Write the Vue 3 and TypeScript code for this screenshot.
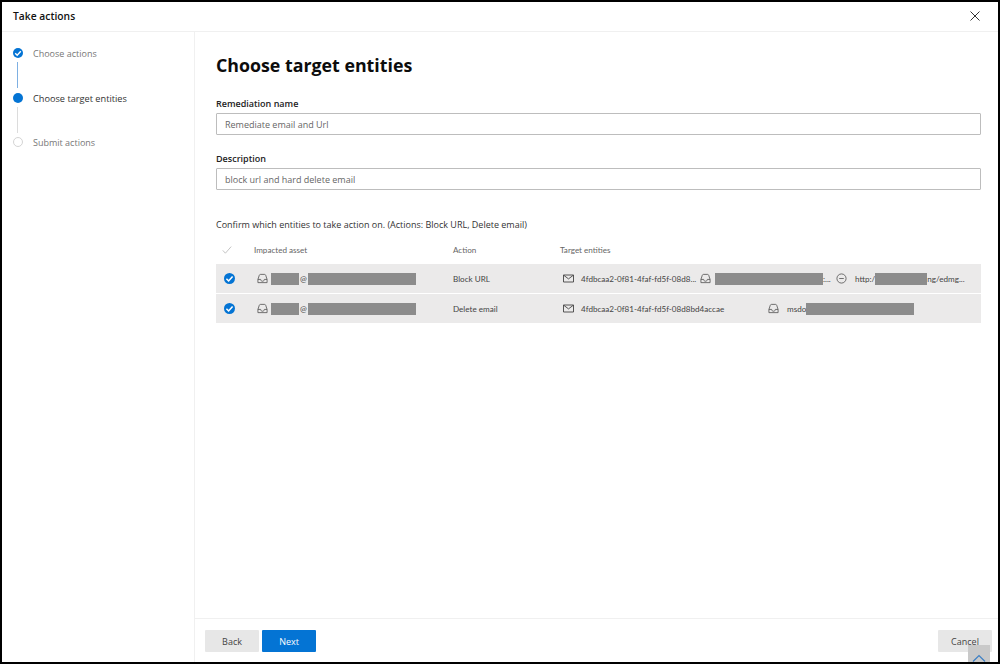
<script setup lang="ts">
type Entity = {
  icon: "mail" | "inbox" | "url";
  before?: string;
  redact?: number;
  after?: string;
  width?: number;
  gap: number;
};
interface Row {
  action: string;
  entities: Entity[];
}

const steps = [
  { label: "Choose actions", state: "done" },
  { label: "Choose target entities", state: "current" },
  { label: "Submit actions", state: "todo" },
];

const rows: Row[] = [
  {
    action: "Block URL",
    entities: [
      { icon: "mail", before: "4fdbcaa2-0f81-4faf-fd5f-08d8...", width: 137, gap: 7 },
      { icon: "inbox", redact: 108, after: ":...", width: 136, gap: 4 },
      { icon: "url", before: "http:/", redact: 52, after: "ng/edmg...", gap: 8 },
    ],
  },
  {
    action: "Delete email",
    entities: [
      { icon: "mail", before: "4fdbcaa2-0f81-4faf-fd5f-08d8bd4accae", width: 205, gap: 7 },
      { icon: "inbox", before: "msdo", redact: 108, gap: 8 },
    ],
  },
];
</script>

<template>
  <div class="frame">
    <header class="top">
      <span class="title">Take actions</span>
      <svg class="close" width="10" height="10" viewBox="0 0 10 10" aria-label="Close">
        <path d="M.5.5l9 9M9.5.5l-9 9" stroke="#333" stroke-width="1" fill="none" />
      </svg>
    </header>

    <div class="body">
      <nav class="steps">
        <div v-for="(step, i) in steps" :key="step.label" class="step" :class="step.state">
          <div class="marker">
            <span class="dot">
              <svg v-if="step.state === 'done'" width="10" height="10" viewBox="0 0 10 10">
                <path d="M2.2 5.2l2 2 3.6-4" stroke="#fff" stroke-width="1.4" fill="none" />
              </svg>
            </span>
            <span v-if="i < steps.length - 1" class="line" />
          </div>
          <span class="step-label">{{ step.label }}</span>
        </div>
      </nav>

      <main class="main">
        <div class="content">
          <h1>Choose target entities</h1>

          <label class="field-label" for="rem-name">Remediation name</label>
          <input id="rem-name" class="field" type="text" value="Remediate email and Url" readonly />

          <label class="field-label second" for="rem-desc">Description</label>
          <input id="rem-desc" class="field" type="text" value="block url and hard delete email" readonly />

          <p class="confirm">Confirm which entities to take action on. (Actions: Block URL, Delete email)</p>

          <div class="grid">
            <div class="row head">
              <span class="c-check">
                <svg width="10" height="10" viewBox="0 0 10 10">
                  <path d="M.8 5.4l2.6 2.8L9.2 1.6" stroke="#b5b5b5" stroke-width=".8" fill="none" />
                </svg>
              </span>
              <span class="c-asset">Impacted asset</span>
              <span class="c-action">Action</span>
              <span class="c-target">Target entities</span>
            </div>

            <div v-for="row in rows" :key="row.action" class="row item">
              <span class="c-check">
                <span class="tick">
                  <svg width="11" height="11" viewBox="0 0 10 10">
                    <path d="M2.2 5.2l2 2 3.6-4" stroke="#fff" stroke-width="1.4" fill="none" />
                  </svg>
                </span>
              </span>
              <span class="c-asset">
                <svg class="ico" width="11" height="11" viewBox="0 0 12 12">
                  <path d="M1 7v3.5h10V7M1 7l1.5-4.5c.2-.6.7-1 1.3-1h4.4c.6 0 1.1.4 1.3 1L11 7M1 7h3c0 1.200.9 2 2 2s2-.8 2-2h3" stroke="#555" stroke-width=".9" fill="none" />
                </svg>
                <i class="redact" style="width: 28px" /><span class="at">@</span><i class="redact" style="width: 108px" />
              </span>
              <span class="c-action">{{ row.action }}</span>
              <span class="c-target">
                <span
                  v-for="(entity, n) in row.entities"
                  :key="n"
                  class="entity"
                  :style="{ width: entity.width ? entity.width + 'px' : undefined }"
                >
                  <svg v-if="entity.icon === 'mail'" class="ico" :style="{ marginRight: entity.gap + 'px' }" width="11" height="9" viewBox="0 0 11 9">
                    <path d="M.5 1h10v7H.5zM.8 1.300l4.700 3.600 4.700-3.600" stroke="#444" stroke-width=".9" fill="none" />
                  </svg>
                  <svg v-else-if="entity.icon === 'inbox'" class="ico" :style="{ marginRight: entity.gap + 'px' }" width="11" height="11" viewBox="0 0 12 12">
                    <path d="M1 7v3.5h10V7M1 7l1.5-4.5c.2-.6.7-1 1.3-1h4.4c.6 0 1.1.4 1.3 1L11 7M1 7h3c0 1.200.9 2 2 2s2-.8 2-2h3" stroke="#555" stroke-width=".9" fill="none" />
                  </svg>
                  <svg v-else class="ico" :style="{ marginRight: entity.gap + 'px' }" width="11" height="11" viewBox="0 0 12 12">
                    <circle cx="6" cy="6" r="5" stroke="#555" stroke-width=".9" fill="none" />
                    <path d="M3.500 6h5" stroke="#555" stroke-width=".9" />
                  </svg>
                  <span v-if="entity.before">{{ entity.before }}</span>
                  <i v-if="entity.redact" class="redact" :style="{ width: entity.redact + 'px' }" />
                  <span v-if="entity.after">{{ entity.after }}</span>
                </span>
              </span>
            </div>
          </div>
        </div>

        <footer class="bottom">
          <button class="btn" type="button">Back</button>
          <button class="btn primary" type="button">Next</button>
          <button class="btn cancel" type="button">Cancel</button>
        </footer>
      </main>
    </div>

    <span class="scroll-top">
      <svg width="14" height="8" viewBox="0 0 14 8">
        <path d="M1 7.500l6-6 6 6" stroke="#3c7fc4" stroke-width="1.200" fill="none" />
      </svg>
    </span>
  </div>
</template>

<style scoped>
.frame {
  position: relative;
  box-sizing: border-box;
  width: 1000px;
  height: 664px;
  border: 2px solid #000;
  background: #fff;
  display: flex;
  flex-direction: column;
  overflow: hidden;
  font-family: "Open Sans", "Noto Sans", sans-serif;
  font-size: 9px;
  color: #444;
}

.top {
  height: 30px;
  flex: none;
  box-sizing: border-box;
  border-bottom: 1px solid #f0f0f0;
  display: flex;
  align-items: center;
  justify-content: space-between;
  padding: 0 18px 2px 11px;
}

.title {
  font-size: 10.300px;
  font-weight: 600;
  color: #111;
}

.body {
  flex: 1;
  display: flex;
  min-height: 0;
}

.steps {
  width: 193px;
  flex: none;
  box-sizing: border-box;
  border-right: 1px solid #f0f0f0;
  padding: 16px 0 0 10px;
}

.step {
  display: flex;
  height: 44.500px;
  gap: 10px;
  color: #777;
}

.step-label {
  line-height: 11px;
}

.step.current {
  color: #333;
  font-size: 9.200px;
}

.marker {
  width: 11px;
  flex: none;
  display: flex;
  flex-direction: column;
  align-items: center;
}

.dot {
  box-sizing: border-box;
  width: 10px;
  height: 10px;
  flex: none;
  border-radius: 50%;
  background: #0474d4;
  display: flex;
  align-items: center;
  justify-content: center;
}

.todo .dot {
  background: #fff;
  border: 1px solid #d4d4d4;
}

.line {
  width: 1px;
  height: 26px;
  margin-top: 4px;
  background: #dcdcdc;
}

.done .line {
  background: #7eb0e2;
}

.main {
  flex: 1;
  min-width: 0;
  display: flex;
  flex-direction: column;
}

.content {
  flex: 1;
  padding: 21px 17px 0 21px;
}

h1 {
  margin: 0 0 20px;
  font-size: 17.800px;
  line-height: 25px;
  font-weight: 700;
  color: #0c0c0c;
}

.field-label {
  display: block;
  font-weight: 600;
  color: #222;
  line-height: 12px;
  margin-bottom: 3px;
}

.field-label.second {
  margin-top: 18px;
}

.field {
  display: block;
  box-sizing: border-box;
  width: 100%;
  height: 22px;
  padding: 0 8px;
  border: 1px solid #bdbdbd;
  border-radius: 1px;
  font: inherit;
  color: #666;
  outline: none;
}

.confirm {
  margin: 29px 0 0;
  line-height: 12px;
  color: #333;
}

.grid {
  margin-top: 6px;
  font-family: Lato, "Open Sans", sans-serif;
  font-size: 8.100px;
}

.row {
  display: flex;
  align-items: center;
}

.head {
  height: 25px;
  margin-bottom: 2px;
  color: #666;
}

.item {
  height: 29px;
  background: #ebeaea;
  margin-bottom: 1px;
}

.c-check {
  width: 38px;
  flex: none;
  padding-left: 8px;
  box-sizing: border-box;
  display: flex;
}

.head .c-check {
  padding-left: 6px;
}

.c-asset {
  width: 199px;
  flex: none;
  display: flex;
  align-items: center;
}

.c-action {
  width: 107px;
  flex: none;
}

.c-target {
  flex: 1;
  display: flex;
  align-items: center;
  white-space: nowrap;
}

.head .c-asset {
  display: block;
}

.tick {
  width: 11px;
  height: 11px;
  border-radius: 50%;
  background: #0474d4;
  display: flex;
}

.ico {
  flex: none;
  margin-left: 3px;
}

.c-asset .ico {
  margin-right: 3px;
}

.entity {
  display: flex;
  align-items: center;
  flex: none;
}

.redact {
  display: block;
  height: 12px;
  flex: none;
  background: #8c8c8c;
}

.at {
  width: 9px;
  text-align: center;
}

.bottom {
  flex: none;
  height: 44px;
  box-sizing: border-box;
  border-top: 1px solid #f0f0f0;
  padding: 11px 6px 0 10px;
  display: flex;
  align-items: flex-start;
  gap: 3px;
}

.btn {
  width: 54px;
  height: 22px;
  padding: 0;
  border: 0;
  border-radius: 1px;
  background: #e7e7e7;
  font: inherit;
  color: #444;
}

.primary {
  background: #0474d4;
  color: #fff;
}

.cancel {
  margin-left: auto;
}

.scroll-top {
  position: absolute;
  right: 8px;
  bottom: 0;
  width: 22px;
  height: 17px;
  background: #c9c9c9;
  display: flex;
  justify-content: center;
  padding-top: 9px;
  box-sizing: border-box;
}
</style>

<style>
body {
  background: #fff;
}
</style>
